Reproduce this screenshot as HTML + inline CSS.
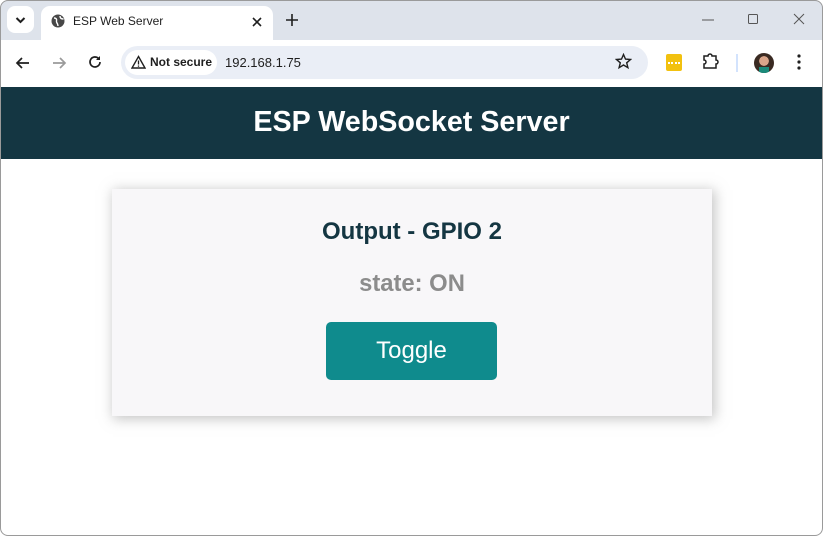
<!DOCTYPE html>
<html><head><meta charset="utf-8"><style>
*{margin:0;padding:0;box-sizing:border-box}
html,body{width:823px;height:536px;overflow:hidden;background:#fff;font-family:"Liberation Sans",Arial,sans-serif}
.win{position:absolute;left:0;top:0;width:823px;height:536px;border-radius:8px;overflow:hidden;background:#fff}
.frame{position:absolute;left:0;top:0;width:823px;height:536px;border:1px solid #9a9a9a;border-radius:8px;pointer-events:none}
.tabbar{position:absolute;left:0;top:0;width:823px;height:40px;background:#dee3eb}
.tab{position:absolute;left:41px;top:6px;width:232px;height:34px;background:#fff;border-radius:9px 9px 0 0}
.tabtitle{position:absolute;left:32px;top:8px;font-size:12px;color:#1f1f1f}
.dd{position:absolute;left:7px;top:6px;width:27px;height:27px;background:#fff;border-radius:8px}
.toolbar{position:absolute;left:0;top:40px;width:823px;height:47px;background:#fff}
.omni{position:absolute;left:121px;top:6px;width:527px;height:33px;background:#eaeef6;border-radius:17px}
.chip{position:absolute;left:4px;top:4px;width:92px;height:25px;background:#fff;border-radius:13px;font-size:12px;font-weight:bold;color:#1f1f1f}
.url{position:absolute;left:104px;top:9px;font-size:13px;color:#1f1f1f}
.header{position:absolute;left:0;top:87px;width:823px;height:72px;background:#143642;color:#fff;font-weight:bold;font-size:28.7px;text-align:center;line-height:70px}
.card{position:absolute;left:112px;top:189px;width:600px;height:227px;background:#f8f7f9;box-shadow:2px 2px 12px 1px rgba(140,140,140,.5)}
.h2{position:absolute;left:0;width:100%;top:29px;text-align:center;font-size:24px;font-weight:bold;color:#143642}
.st{position:absolute;left:0;width:100%;top:81px;text-align:center;font-size:23.8px;font-weight:bold;color:#8c8c8c}
.btn{position:absolute;left:214px;top:133px;width:171px;height:58px;background:#0f8b8d;border-radius:5px;color:#fff;font-size:24px;text-align:center;line-height:58px}
</style></head><body><div class="win">
<div class="tabbar">
 <div class="dd"><svg width="27" height="27"><path d="M9.5 12l4 4 4-4" stroke="#1f1f1f" stroke-width="2" fill="none"/></svg></div>
 <div class="tab">
  <svg style="position:absolute;left:9px;top:7px" width="16" height="16"><circle cx="8" cy="8" r="6.5" fill="#474747"/><path d="M4 5c2 0 3 1 2.5 3S8 10 8 13M10 3c0 2 1 3 3.5 3" stroke="#fff" stroke-width="1.4" fill="none"/></svg>
  <div class="tabtitle">ESP Web Server</div>
  <svg style="position:absolute;left:208px;top:8px" width="16" height="16"><path d="M4 4l8 8M12 4l-8 8" stroke="#1f1f1f" stroke-width="1.6"/></svg>
 </div>
 <svg style="position:absolute;left:284px;top:12px" width="16" height="16"><path d="M8 2v12M2 8h12" stroke="#1f1f1f" stroke-width="1.6"/></svg>
 <svg style="position:absolute;left:700px;top:12px" width="16" height="16"><path d="M2 8h12" stroke="#555" stroke-width="1"/></svg>
 <svg style="position:absolute;left:745px;top:11px" width="16" height="16"><rect x="3.5" y="3.5" width="9" height="9" rx="1" stroke="#555" fill="none"/></svg>
 <svg style="position:absolute;left:791px;top:11px" width="16" height="16"><path d="M3 3l10 10M13 3L3 13" stroke="#555" stroke-width="1"/></svg>
</div>
<div class="toolbar">
 <svg style="position:absolute;left:14px;top:14px" width="18" height="18"><path d="M15 9H3M8 4L3 9l5 5" stroke="#1f1f1f" stroke-width="1.7" fill="none"/></svg>
 <svg style="position:absolute;left:50px;top:14px" width="18" height="18"><path d="M3 9h12M10 4l5 5-5 5" stroke="#9a9a9a" stroke-width="1.7" fill="none"/></svg>
 <svg style="position:absolute;left:86px;top:13px" width="18" height="18"><path d="M14 9a5 5 0 1 1-1.5-3.6" stroke="#1f1f1f" stroke-width="1.7" fill="none"/><path d="M14 3v4h-4" fill="#1f1f1f"/></svg>
 <div class="omni">
  <div class="chip"><svg style="position:absolute;left:6px;top:5px" width="15" height="14"><path d="M7.5 1.5L14 13H1z" stroke="#1f1f1f" stroke-width="1.4" fill="none"/><path d="M7.5 5.5v4M7.5 10.5v1.2" stroke="#1f1f1f" stroke-width="1.3"/></svg><span style="position:absolute;left:25px;top:5px">Not secure</span></div>
  <div class="url">192.168.1.75</div>
  <svg style="position:absolute;left:494px;top:7px" width="17" height="17"><path d="M8.5 1.5l2 4.6 5 .4-3.8 3.3 1.2 4.9-4.4-2.7-4.4 2.7 1.2-4.9L1.5 6.5l5-.4z" stroke="#1f1f1f" stroke-width="1.4" fill="none"/></svg>
 </div>
 <div style="position:absolute;left:666px;top:14px;width:16px;height:17px;background:#f2c10f;border-radius:2px"><div style="position:absolute;left:2px;top:8px;width:12px;height:2px;border-top:2px dotted #fff"></div></div>
 <svg style="position:absolute;left:701px;top:12px" width="19" height="19"><path d="M3 4h4a2 2 0 0 1 4 0h4v4a2 2 0 0 1 0 4v4H3v-4a2 2 0 0 0 0-4z" stroke="#1f1f1f" stroke-width="1.5" fill="none"/></svg>
 <div style="position:absolute;left:736px;top:14px;width:2px;height:18px;background:#d3e3fd"></div>
 <div style="position:absolute;left:754px;top:13px;width:20px;height:20px;border-radius:50%;background:radial-gradient(circle at 50% 40%,#d9a58a 30%,#3a2a22 32%);overflow:hidden"><div style="position:absolute;left:5px;top:14px;width:10px;height:8px;background:#1a8a7a"></div></div>
 <svg style="position:absolute;left:791px;top:13px" width="16" height="18"><circle cx="8" cy="3" r="1.6" fill="#1f1f1f"/><circle cx="8" cy="9" r="1.6" fill="#1f1f1f"/><circle cx="8" cy="15" r="1.6" fill="#1f1f1f"/></svg>
</div>
<div class="header">ESP WebSocket Server</div>
<div class="card">
 <div class="h2">Output - GPIO 2</div>
 <div class="st">state: ON</div>
 <div class="btn">Toggle</div>
</div>
</div><div class="frame"></div></body></html>
